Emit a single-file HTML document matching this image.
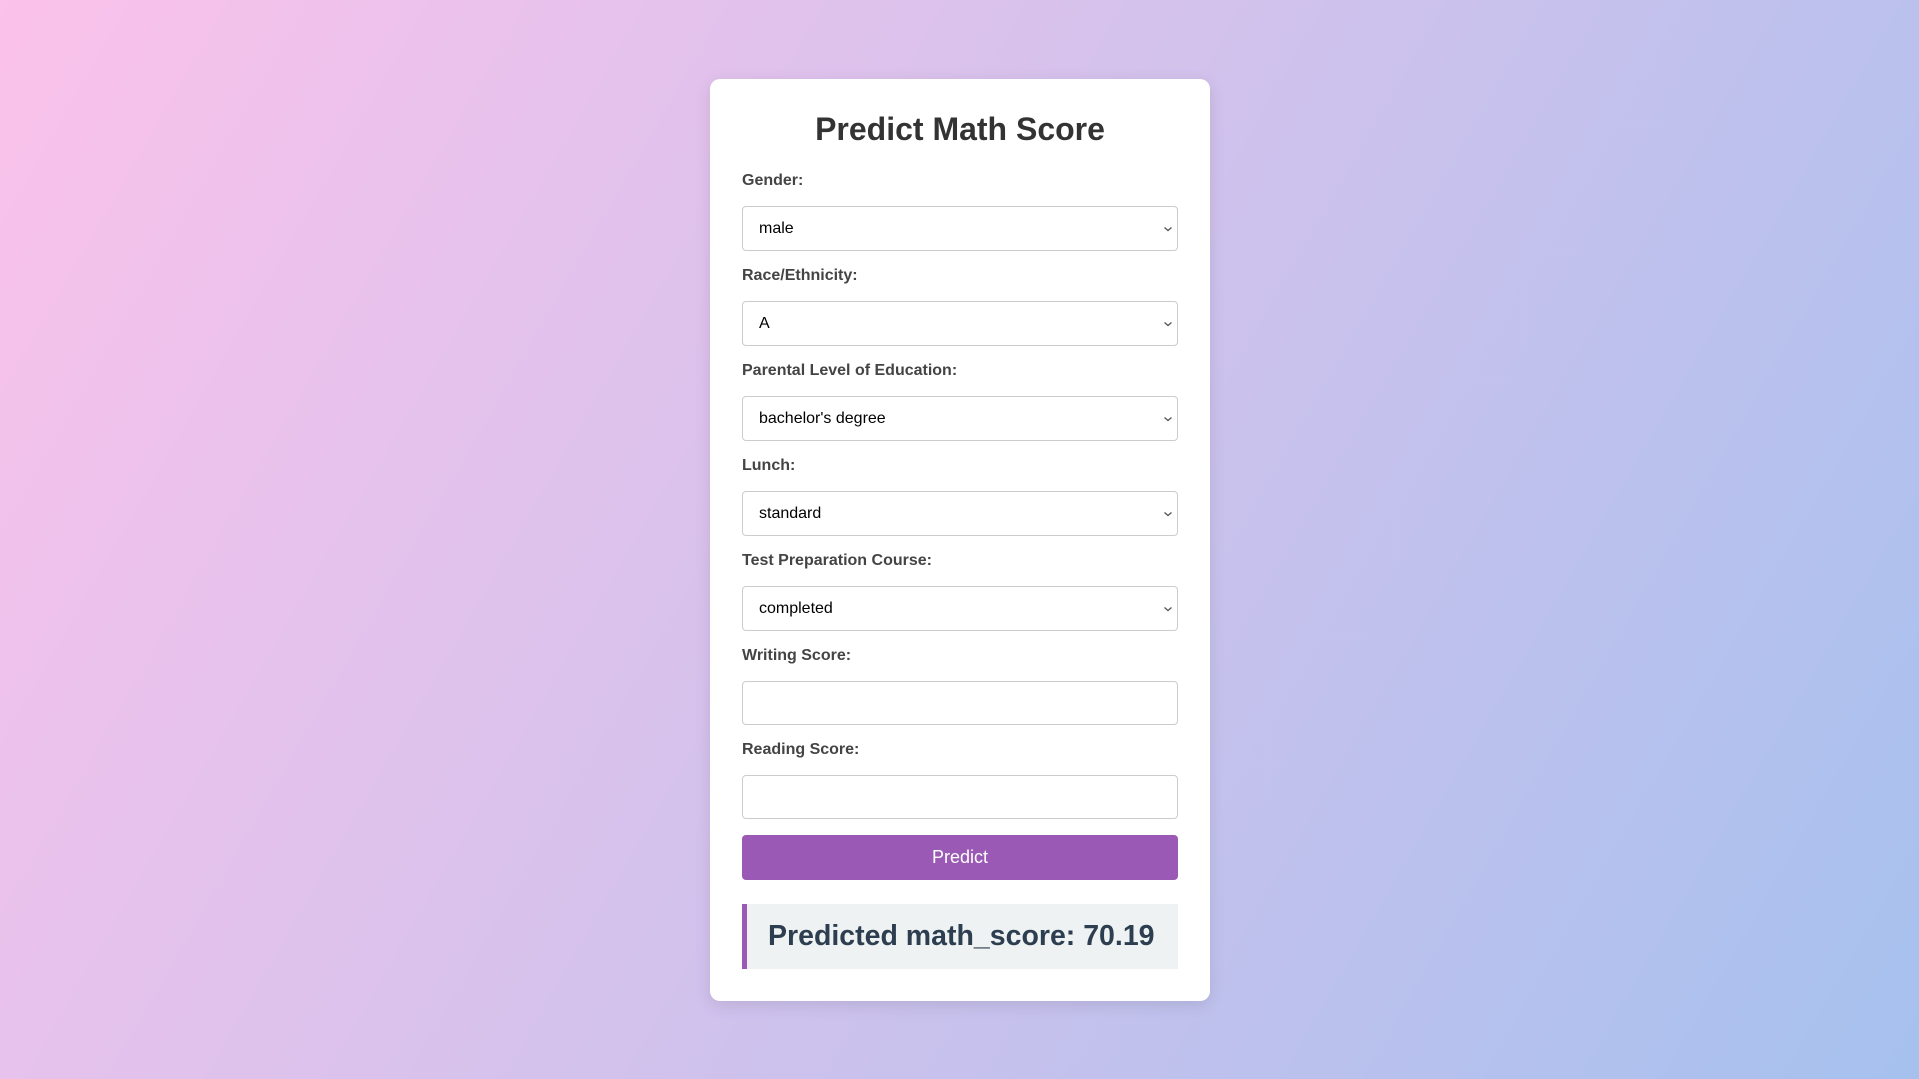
<!DOCTYPE html>
<html><head><meta charset="utf-8"><style>
*{box-sizing:border-box;margin:0;padding:0}
html,body{width:1919px;height:1079px;overflow:hidden}
body{background:linear-gradient(120deg,#fbc2eb 0%,#a6c1ee 100%);font-family:"Liberation Sans",Arial,sans-serif;position:relative}
.card{position:absolute;left:710px;top:79px;width:500px;height:922px;background:#fff;border-radius:10px;box-shadow:0 4px 16px rgba(0,0,0,0.1)}
h1{position:absolute;left:0;width:500px;top:109px;text-align:center;font-size:32px;font-weight:bold;color:#333;line-height:40px}
.lbl{position:absolute;left:742px;font-size:16px;font-weight:bold;color:#444;line-height:20px;white-space:nowrap}
.sel{position:absolute;left:742px;width:436px;height:45px;border:1px solid #ccc;border-radius:4px;background:#fff;font-size:16px;color:#000;line-height:44px;padding-left:16px;white-space:nowrap}
.sel svg{position:absolute;right:4px;top:18px}
.btn{position:absolute;left:742px;top:835px;width:436px;height:45px;background:#9b59b6;border-radius:4px;color:#fff;font-size:18px;text-align:center;line-height:45px}
.res{position:absolute;left:742px;top:904px;width:436px;height:65px;background:#eef2f3;border-left:5px solid #9b59b6;color:#2c3e50;font-size:28.5px;font-weight:bold;line-height:65px;padding-left:21px;white-space:nowrap}
</style></head><body>
<div class="card"></div>
<h1 style="left:710px">Predict Math Score</h1>
<div class="lbl" style="top:171px">Gender:</div>
<div class="sel" style="top:206px">male<svg width="10" height="8" viewBox="0 0 10 8"><path d="M1.5 2.5 L5 5.5 L8.5 2.5" stroke="#555" stroke-width="1.3" fill="none"/></svg></div>
<div class="lbl" style="top:266px">Race/Ethnicity:</div>
<div class="sel" style="top:301px">A<svg width="10" height="8" viewBox="0 0 10 8"><path d="M1.5 2.5 L5 5.5 L8.5 2.5" stroke="#555" stroke-width="1.3" fill="none"/></svg></div>
<div class="lbl" style="top:361px">Parental Level of Education:</div>
<div class="sel" style="top:396px">bachelor's degree<svg width="10" height="8" viewBox="0 0 10 8"><path d="M1.5 2.5 L5 5.5 L8.5 2.5" stroke="#555" stroke-width="1.3" fill="none"/></svg></div>
<div class="lbl" style="top:456px">Lunch:</div>
<div class="sel" style="top:491px">standard<svg width="10" height="8" viewBox="0 0 10 8"><path d="M1.5 2.5 L5 5.5 L8.5 2.5" stroke="#555" stroke-width="1.3" fill="none"/></svg></div>
<div class="lbl" style="top:551px">Test Preparation Course:</div>
<div class="sel" style="top:586px">completed<svg width="10" height="8" viewBox="0 0 10 8"><path d="M1.5 2.5 L5 5.5 L8.5 2.5" stroke="#555" stroke-width="1.3" fill="none"/></svg></div>
<div class="lbl" style="top:646px">Writing Score:</div>
<div class="sel" style="top:681px;height:44px"></div>
<div class="lbl" style="top:740px">Reading Score:</div>
<div class="sel" style="top:775px;height:44px"></div>
<div class="btn">Predict</div>
<div class="res">Predicted math_score: 70.19</div>
</body></html>
